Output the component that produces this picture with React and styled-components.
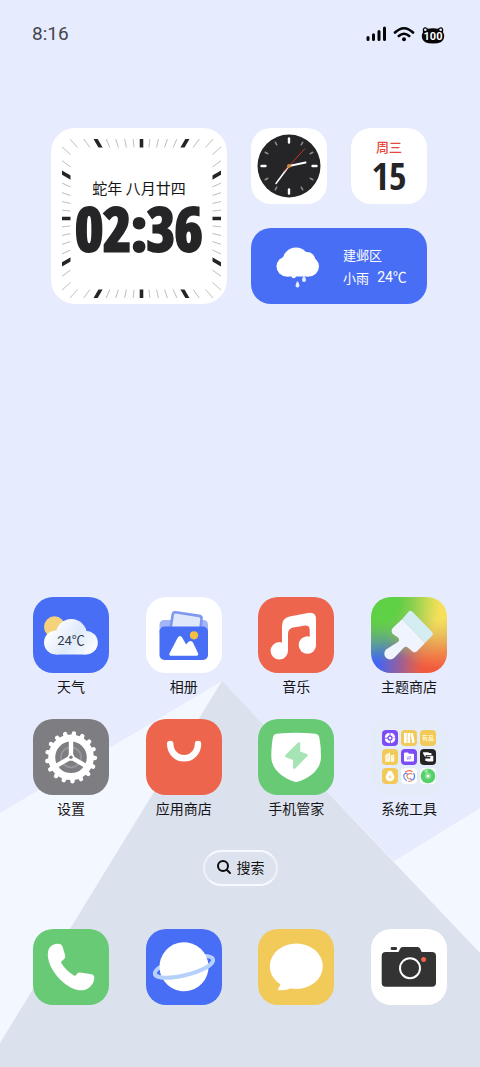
import styled, {createGlobalStyle, css} from "styled-components";

const GlobalStyle = createGlobalStyle`
  * {
    box-sizing: border-box;
  }

  body {
    margin: 0;
    background: #e6ebfe;
    font-family: "Noto Sans CJK SC", "Noto Sans", sans-serif;
    color: #151515;
  }
`;

const colors = {
    blue: "#496ef6",
    red: "#ec654c",
    green: "#68ca75",
    yellow: "#f1ca59",
    gray: "#7e7d82",
    purple: "#7c4df5",
    dark: "#252527",
    white: "#ffffff",
};

const digitFont = `Roboto, "Noto Sans CJK SC", sans-serif`;
const narrowFont = `"Liberation Sans Narrow", "Open Sans Condensed", "Liberation Sans", sans-serif`;

const Screen = styled.div`
  position: relative;
  display: flex;
  flex-direction: column;
  min-height: 100vh;
  padding-bottom: 62px;
  overflow: hidden;
`;
const Wallpaper = styled.svg`
  position: absolute;
  inset: 0;
  z-index: -1;
  width: 100%;
  height: 100%;
`;

const StatusBar = styled.header`
  display: flex;
  align-items: center;
  justify-content: space-between;
  padding: 24px 35px 0 32px;
  font-family: ${digitFont};
  font-size: 19px;
  line-height: 20px;
  color: #444650;
`;
const StatusIcons = styled.div`
  display: flex;
  align-items: center;
  gap: 6px;

  svg {
    display: block;
  }
`;

const Widgets = styled.section`
  display: grid;
  grid-template-columns: 1fr 1fr;
  gap: 24px;
  padding: 0 53px 0 51px;
  margin-top: 84px;
`;
const SideWidgets = styled.div`
  display: grid;
  grid-template-columns: 1fr 1fr;
  grid-template-rows: 1fr 1fr;
  gap: 24px;
`;
const Card = styled.div`
  display: flex;
  flex-direction: column;
  align-items: center;
  justify-content: center;
  border-radius: 20px;
  background: #fff;

  svg {
    display: block;
  }
`;
const BigClock = styled(Card)`
  position: relative;
  aspect-ratio: 1;
  padding-top: 4px;
  border-radius: 24px;
`;
const Dial = styled.svg`
  position: absolute;
  inset: 0;
  width: 100%;
  height: 100%;
`;
const LunarDate = styled.div`
  font-size: 15px;
  line-height: 20px;
`;
const Digits = styled.time`
  font-family: ${narrowFont};
  font-size: 60px;
  font-weight: 800;
  line-height: 60px;
  color: #252527;
  -webkit-text-stroke: 3px #252527;
`;
const DateCard = styled(Card)`
  padding-top: 2px;
`;
const Weekday = styled.div`
  font-size: 13px;
  font-weight: 500;
  line-height: 16px;
  color: #e5483c;
`;
const DayNumber = styled.div`
  font-family: ${narrowFont};
  font-size: 38px;
  font-weight: 600;
  line-height: 40px;
  color: #252527;
`;
const WeatherCard = styled(Card)`
  grid-column: span 2;
  flex-direction: row;
  gap: 24px;
  padding-left: 4px;
  background: ${colors.blue};
  color: #fff;
  font-size: 13px;
  line-height: 23px;
`;
const Forecast = styled.div`
  display: flex;
  gap: 8px;
`;
const Degrees = styled.span`
  font-family: ${digitFont};
  font-size: 14px;
`;

const Spacer = styled.div`
  flex: 1;
`;

const appRow = css`
  display: grid;
  grid-template-columns: repeat(4, 76px);
  justify-content: space-between;
  padding: 0 33px;
`;
const Apps = styled.main`
  ${appRow};
  row-gap: 23px;
`;
const Dock = styled.nav`
  ${appRow};
  margin-top: 43px;
`;
const AppButton = styled.button`
  display: flex;
  flex-direction: column;
  align-items: center;
  gap: 3px;
  padding: 0;
  border: 0;
  background: none;
  color: inherit;
  font: inherit;
  font-size: 14px;
  line-height: 20px;
  white-space: nowrap;
`;
const Tile = styled.span`
  display: block;
  width: 76px;
  height: 76px;
  border-radius: 20px;
  overflow: hidden;
  background: ${props => props.$bg};

  svg {
    display: block;
  }
`;
const FolderTile = styled(Tile)`
  display: grid;
  grid-template-columns: repeat(3, 16px);
  place-content: center;
  gap: 3px;
`;
const MiniTile = styled.span`
  width: 16px;
  height: 16px;
  border-radius: 4px;
  overflow: hidden;
  background: ${props => props.$bg};
`;

const SearchButton = styled.button`
  display: flex;
  align-items: center;
  align-self: center;
  gap: 5px;
  height: 36px;
  margin-top: 32px;
  padding: 0 11px 2px;
  border: 2px solid rgba(255, 255, 255, 0.5);
  border-top-color: #f6f9ff;
  border-bottom-color: #f6f9ff;
  border-radius: 18px;
  background: rgba(255, 255, 255, 0.08);
  color: inherit;
  font: inherit;
  font-size: 14px;
  line-height: 20px;
`;

const Icon = ({children}) => (
    <svg width="76" height="76" viewBox="0 0 76 76" aria-hidden="true">{children}</svg>
);

const WeatherIcon = () => (
    <Icon>
        <defs>
            <linearGradient id="cloud" gradientUnits="userSpaceOnUse" x1="20" y1="26" x2="62" y2="56">
                <stop offset="0" stopColor="#fff"/>
                <stop offset="0.5" stopColor="#dfeafb"/>
                <stop offset="1" stopColor="#fff"/>
            </linearGradient>
        </defs>
        <circle cx="21.5" cy="29.8" r="10.5" fill="#f5d27b"/>
        <g fill="url(#cloud)">
            <circle cx="38.3" cy="37.5" r="15.5"/>
            <circle cx="23" cy="45.5" r="12"/>
            <circle cx="53" cy="45.7" r="11.8"/>
            <path d="M23 38H53V57.5H23z"/>
        </g>
        <text x="38" y="48" fontFamily="Roboto, 'Noto Sans CJK SC', sans-serif" fontSize="13" textAnchor="middle"
              fill="#333a4a">24℃
        </text>
    </Icon>
);

const GalleryIcon = () => (
    <Icon>
        <path d="M13.5 36v-8q0-5 5-5H26V36zM50 36V23h7q5 0 5 5v8z" fill="#a3b4f7"/>
        <path d="M24.5 32l2.2-14.5q.4-2.5 3-2.2l23.5 3.6q2.6.5 2.3 3L54.5 32z" fill="#dfe7fb"
              stroke="#7e98f1" strokeWidth="2.6"/>
        <rect x="13.5" y="29.5" width="48.5" height="33.5" rx="5" fill={colors.blue}/>
        <path d="M24.8 57.2L33 41.5q1-1.8 2 0L39.8 50l3.6-4q1.2-1.2 2.2 0.2l5.2 11z" fill="#fff" stroke="#fff"
              strokeWidth="3" strokeLinejoin="round"/>
        <circle cx="48" cy="38.3" r="4.1" fill="#f3c043"/>
    </Icon>
);

const MusicIcon = () => (
    <Icon>
        <path
            d="M24 54V29q0-8 7.5-9.5L50 15.9Q58 14.5 58 22V48H51.7V33q0-5-5.7-4.3L35 30.5q-5 1-5 6.5V54z"
            fill="#fff"/>
        <circle cx="21.3" cy="53.8" r="8.7" fill="#fff"/>
        <circle cx="49.4" cy="48" r="8.7" fill="#fff"/>
    </Icon>
);

const ThemeIcon = () => (
    <Icon>
        <path
            d="M31.3 22L22 30.7q-2.5 2.6-.5 6l5.5 3.8q2 2 .3 4.3L15 52.5a5.8 5.8 0 1 0 8.3 8.2L32.5 51q2-2.3 4.3-.5l4.7 4q2.3 1.8 4.5-.2L54 46z"
            fill="#eff4fe"/>
        <path d="M31.3 22l6.5-7.4q1.7-1.7 3.4 0l20 20.5q1.7 1.7 0 3.4L54 46z" fill="#d3edf2"/>
    </Icon>
);

const SettingsIcon = () => (
    <Icon>
        <g transform="translate(38 38.3)" stroke="#fff" fill="none">
            {Array.from({length: 17}, (_, i) => (
                <path key={i} d="M0 -20V-24" strokeWidth="4.4" strokeLinecap="round"
                      transform={`rotate(${7 + i * 360 / 17})`}/>
            ))}
            <circle r="10" stroke="#97969b" strokeWidth="1.8"/>
            <circle r="19.3" strokeWidth="7"/>
            {[0, 120, 240].map(angle => (
                <path key={angle} d="M0 0V-18" strokeWidth="4.4" transform={`rotate(${angle})`}/>
            ))}
            <circle r="3" fill="#fff"/>
            <circle r="1.7" fill={colors.gray} stroke="none"/>
        </g>
    </Icon>
);

const StoreIcon = () => (
    <Icon>
        <path d="M24.2 25a13.9 14.3 0 0 0 27.8 0" fill="none" stroke="#fff" strokeWidth="6.5"
              strokeLinecap="round"/>
    </Icon>
);

const GuardIcon = () => (
    <Icon>
        <path
            d="M18.5 14.8Q38 12.6 57.5 14.8q3.3.5 3.9 4Q63 27 63 38C63 52 49 60 40.5 62.6q-2.3.8-4.7 0C26 59 13.3 51 13.3 38q0-11 1.5-19 .7-3.7 3.7-4.2z"
            fill="#fff"/>
        <path d="M41 24.5v9l7.5 2.7-12.2 12.5v-8.5l-8-3.2z" fill="#a6e3b5" stroke="#a6e3b5" strokeWidth="2.5"
              strokeLinejoin="round"/>
    </Icon>
);

const PhoneIcon = () => (
    <Icon>
        <path
            d="M16 19.5C19 15 24.5 14 27.5 15.3q1.5.7 2 2.2l2.7 9q.5 2-.8 3.2l-2.8 2.5q-.8.8-.2 2Q33 41.5 41 46.6q1 .6 1.8-.4l1.7-2q.8-1 2.5-.7l11.5 1.7q2.8.5 2.8 3.5C61 56 54.5 62 46.5 61.3 31 59 14.8 40 14.8 25.5q0-3.8 1.2-6z"
            fill="#fff"/>
    </Icon>
);

const BrowserIcon = () => (
    <Icon>
        <g transform="translate(38 37.8) rotate(-14)" fill="none" stroke="#b5d1fb" strokeWidth="4">
            <ellipse rx="30" ry="8.5"/>
            <circle r="24.5" fill="#fff" stroke="none"/>
            <path d="M-30 0A30 8.5 0 0 0 30 0"/>
        </g>
    </Icon>
);

const MessageIcon = () => (
    <Icon>
        <ellipse cx="38.3" cy="37.2" rx="26.5" ry="22.8" fill="#fff"/>
        <path d="M22 52q1.5 3-1.5 7-1.3 2.3 1.5 2.3 8 .2 12.5-3.3z" fill="#fff"/>
    </Icon>
);

const CameraIcon = () => (
    <Icon>
        <rect x="19.7" y="18" width="6.3" height="3" rx="1.3" fill="#333"/>
        <path
            d="M14.7 23H27.5l1.7-3.5q.6-1.5 2.3-1.5H46.7q1.7 0 2.3 1.5L50.7 23H61q4 0 4 4V53.7q0 4-4 4H14.7q-4 0-4-4V27q0-4 4-4z"
            fill="#333"/>
        <circle cx="39" cy="39.2" r="10" fill="none" stroke="#fff" strokeWidth="2"/>
        <circle cx="52.6" cy="30.6" r="2.5" fill="#f0604a"/>
    </Icon>
);

const Mini = ({bg, children}) => (
    <MiniTile $bg={bg}>
        <svg width="16" height="16" viewBox="0 0 16 16" aria-hidden="true">{children}</svg>
    </MiniTile>
);

const ToolsFolder = () => (
    <FolderTile $bg="rgba(226, 235, 247, 0.7)">
        <Mini bg={colors.purple}>
            <circle cx="8" cy="8" r="4" fill="none" stroke="#fff" strokeWidth="2.6" strokeDasharray="5.3 0.98"/>
            <circle cx="8" cy="8" r="1.3" fill="#fff"/>
        </Mini>
        <Mini bg={colors.yellow}>
            <path d="M3 3h2.7v10H3zM6.5 3h2.7v10H6.5zM9.5 3.4l2.4-.4 1.9 9.6-2.5.5z" fill="#fff"/>
        </Mini>
        <Mini bg={colors.yellow}>
            <text x="8" y="10" fontSize="6" fontWeight="700" textAnchor="middle" fill="#fff4cf">有品</text>
        </Mini>
        <Mini bg={colors.yellow}>
            <path d="M3.3 6L8 3.3V12.7H3.3zM8.6 6h3.6v6.7H8.6z" fill="#fff8e3"/>
            <path d="M5 7h1.5M5 9h1.5M9.8 8h1.3" stroke={colors.yellow} strokeWidth="0.7"/>
        </Mini>
        <Mini bg={colors.purple}>
            <path d="M3 4.5q0-1 1-1h3l1 1.3h4q1 0 1 1V11.5q0 1-1 1H4q-1 0-1-1z" fill="#fff"/>
            <path d="M5.8 8h4.2l-1-1M10.2 9.7H6l1 1" fill="none" stroke="#9b78f8" strokeWidth="0.8"/>
        </Mini>
        <Mini bg={colors.dark}>
            <path d="M2.8 4q0-.8.8-.8H8q.8 0 1.2.8h1.5q.8 0 .8.8V6H6.5q-.8 0-.8.8v1H5z" fill="#fff"/>
            <path d="M6.8 6.8H12.5q.8 0 .8.8v4.2q0 .8-.8.8H8q-.7 0-1-.7H5.3V9.5h5V7.8H6.8z" fill="#fff"/>
        </Mini>
        <Mini bg={colors.yellow}>
            <circle cx="8" cy="9" r="4.3" fill="#fff"/>
            <circle cx="8" cy="5.3" r="2.6" fill="#fff"/>
            <circle cx="8" cy="9" r="1.4" fill="#f8dd91"/>
        </Mini>
        <Mini bg={colors.white}>
            <g fill="none" strokeWidth="1.2" strokeLinecap="round">
                <path d="M5.5 12.5A5.5 5.5 0 0 1 3 6.5Q4.5 4.5 6.5 6" stroke="#5c86ed"/>
                <path d="M4.5 4A5.5 5.5 0 0 1 11 3.5M6 7.5Q8 4.5 11 6" stroke="#ef7158"/>
                <path d="M12.8 5.5A5.5 5.5 0 0 1 12.5 11.5Q10.5 12.5 9.5 10.5" stroke="#5c86ed"/>
                <path d="M7.5 13.4a5.5 5.5 0 0 0 3.5-.8M6 8Q6 11 9 11" stroke="#f09a70"/>
            </g>
        </Mini>
        <Mini bg="#f4fbf6">
            <circle cx="8" cy="8" r="7.3" fill="#55d069"/>
            <path d="M8 8L3.5 2.4A7.3 7.3 0 0 1 8 .7z" fill="#8fe49b"/>
            <circle cx="8" cy="8" r="3.3" fill="#7fdf8e"/>
            <circle cx="8" cy="8" r="1.5" fill="#fff"/>
        </Mini>
    </FolderTile>
);

const themeBg = `
  radial-gradient(circle at 12% 8%, #5ed144 0 18%, rgba(94, 209, 68, 0) 62%),
  radial-gradient(circle at 90% 12%, #f6df5a 0 14%, rgba(246, 223, 90, 0) 66%),
  radial-gradient(circle at 88% 95%, #f05a3f 0 16%, rgba(240, 90, 63, 0) 62%),
  radial-gradient(circle at 20% 95%, #4165f5 0 18%, rgba(65, 101, 245, 0) 62%),
  #a5a07c
`;

const apps = [
    {name: "天气", bg: colors.blue, icon: <WeatherIcon/>},
    {name: "相册", bg: colors.white, icon: <GalleryIcon/>},
    {name: "音乐", bg: colors.red, icon: <MusicIcon/>},
    {name: "主题商店", bg: themeBg, icon: <ThemeIcon/>},
    {name: "设置", bg: colors.gray, icon: <SettingsIcon/>},
    {name: "应用商店", bg: colors.red, icon: <StoreIcon/>},
    {name: "手机管家", bg: colors.green, icon: <GuardIcon/>},
    {name: "系统工具", folder: <ToolsFolder/>},
];

const dockApps = [
    {name: "电话", bg: colors.green, icon: <PhoneIcon/>},
    {name: "浏览器", bg: colors.blue, icon: <BrowserIcon/>},
    {name: "短信", bg: colors.yellow, icon: <MessageIcon/>},
    {name: "相机", bg: colors.white, icon: <CameraIcon/>},
];

// rays from the centre, cut to a square ring
const SquareDial = () => (
    <Dial viewBox="0 0 176 176" aria-hidden="true">
        <clipPath id="ring">
            <path d="M11 11H170V170H11zM19.5 19.5V161.5H161.5V19.5z" clipRule="evenodd"/>
        </clipPath>
        <g clipPath="url(#ring)">
            {Array.from({length: 60}, (_, i) => (
                <path key={i} d="M90.5 90.5V-30" transform={`rotate(${i * 6} 90.5 90.5)`}
                      stroke={i % 5 ? "#b4b4b4" : "#252527"} strokeWidth={i % 5 ? 0.8 : 3.6}/>
            ))}
        </g>
    </Dial>
);

const RoundClock = () => (
    <svg width="64" height="64" viewBox="-32 -32 64 64" aria-hidden="true">
        <circle r="31.5" fill="#252527"/>
        {Array.from({length: 12}, (_, i) => (
            <path key={i} d={i % 3 ? "M0 -27.5V-24.5" : "M0 -27.5V-23.5"} transform={`rotate(${i * 30})`}
                  stroke={i % 3 ? "#8c8c8c" : "#fff"} strokeWidth={i % 3 ? 1.5 : 2.4} strokeLinecap="round"/>
        ))}
        <path d="M0 0L16.5 -3.4" stroke="#fff" strokeWidth="2" strokeLinecap="round"/>
        <path d="M0 0L-13 17.5" stroke="#fff" strokeWidth="1.5" strokeLinecap="round"/>
        <path d="M-5 5.5L16 -17.5" stroke="#bf3a30" strokeWidth="1"/>
        <circle r="2" fill="#d58a3a"/>
    </svg>
);

const RainCloud = () => (
    <svg width="44" height="44" viewBox="0 0 44 44" aria-hidden="true">
        <g fill="#fff">
            <circle cx="11.5" cy="22.5" r="10"/>
            <circle cx="21" cy="17" r="13.5"/>
            <circle cx="32" cy="16.5" r="8.5"/>
            <circle cx="34" cy="22.5" r="10"/>
            <path d="M11.5 20H34V32.5H11.5z"/>
            <path d="M16.500 32h4.5a2.2 2.2 0 0 1-4.500 0z"/>
        </g>
        <path
            d="M29 31.5q2 2.5 2 4.5a2 2 0 0 1-4 0q0-2 2-4.5zM22.5 37q2 2.5 2 4.5a2 2 0 0 1-4 0q0-2 2-4.5z"
            fill="#e3ebff"/>
    </svg>
);

const App = () => (
    <Screen>
        <GlobalStyle/>
        <Wallpaper viewBox="0 0 480 1067" preserveAspectRatio="xMidYMax slice" aria-hidden="true">
            <path d="M222 681L0 813V1067H480V808L394 861z" fill="#f3f7ff"/>
            <path d="M222 681L394 861L480 808V600H222z" fill="#e6ebfe"/>
            <path d="M222 681L0 1043V1067H480V953z" fill="#dbe1ed"/>
        </Wallpaper>

        <StatusBar>
            <time>8:16</time>
            <StatusIcons>
                <svg width="21" height="16" viewBox="0 0 21 16" aria-hidden="true">
                    <path d="M2 11.5V13.5M7.5 8.8V13.5M13 5.5V13.5M18.5 2V13.5" stroke="#050505"
                          strokeWidth="3" strokeLinecap="round"/>
                </svg>
                <svg width="22" height="16" viewBox="0 0 22 16" aria-hidden="true">
                    <path d="M2 6.5Q11 -2 20 6.5M5.8 10Q11 5.5 16.2 10" fill="none" stroke="#050505"
                          strokeWidth="2.6" strokeLinecap="round"/>
                    <circle cx="11" cy="13.3" r="2" fill="#050505"/>
                </svg>
                <svg width="24" height="20" viewBox="0 0 24 20" aria-hidden="true">
                    <path
                        d="M12 4.2Q15 4.2 17 4.8 18.5 2.8 20.5 3.3 23 4.3 22 8 23.5 10 23 14 22 19.6 12 19.6T1 14Q.5 10 2 8 1 4.3 3.5 3.3 5.5 2.8 7 4.8 9 4.2 12 4.2z"
                        fill="#050505"/>
                    <circle cx="4.3" cy="5.8" r="1.3" fill="#e6ebfe"/>
                    <circle cx="19.7" cy="5.8" r="1.3" fill="#e6ebfe"/>
                    <text x="12" y="16" fontFamily="Roboto, sans-serif" fontSize="11" fontWeight="700"
                          textAnchor="middle" fill="#fff">100
                    </text>
                </svg>
            </StatusIcons>
        </StatusBar>

        <Widgets>
            <BigClock>
                <SquareDial/>
                <LunarDate>蛇年 八月廿四</LunarDate>
                <Digits>02:36</Digits>
            </BigClock>
            <SideWidgets>
                <Card><RoundClock/></Card>
                <DateCard>
                    <Weekday>周三</Weekday>
                    <DayNumber>15</DayNumber>
                </DateCard>
                <WeatherCard>
                    <RainCloud/>
                    <div>
                        <div>建邺区</div>
                        <Forecast>
                            <span>小雨</span>
                            <Degrees>24℃</Degrees>
                        </Forecast>
                    </div>
                </WeatherCard>
            </SideWidgets>
        </Widgets>

        <Spacer/>

        <Apps>
            {apps.map(app => (
                <AppButton key={app.name} type="button">
                    {app.folder || <Tile $bg={app.bg}>{app.icon}</Tile>}
                    <span>{app.name}</span>
                </AppButton>
            ))}
        </Apps>

        <SearchButton type="button">
            <svg width="16" height="16" viewBox="0 0 16 16" fill="none" stroke="#0c0c0c" strokeWidth="2"
                 strokeLinecap="round" aria-hidden="true">
                <circle cx="7" cy="7" r="5"/>
                <path d="M11 11L14 14"/>
            </svg>
            搜索
        </SearchButton>

        <Dock>
            {dockApps.map(app => (
                <AppButton key={app.name} type="button" aria-label={app.name}>
                    <Tile $bg={app.bg}>{app.icon}</Tile>
                </AppButton>
            ))}
        </Dock>
    </Screen>
);

export default App;
